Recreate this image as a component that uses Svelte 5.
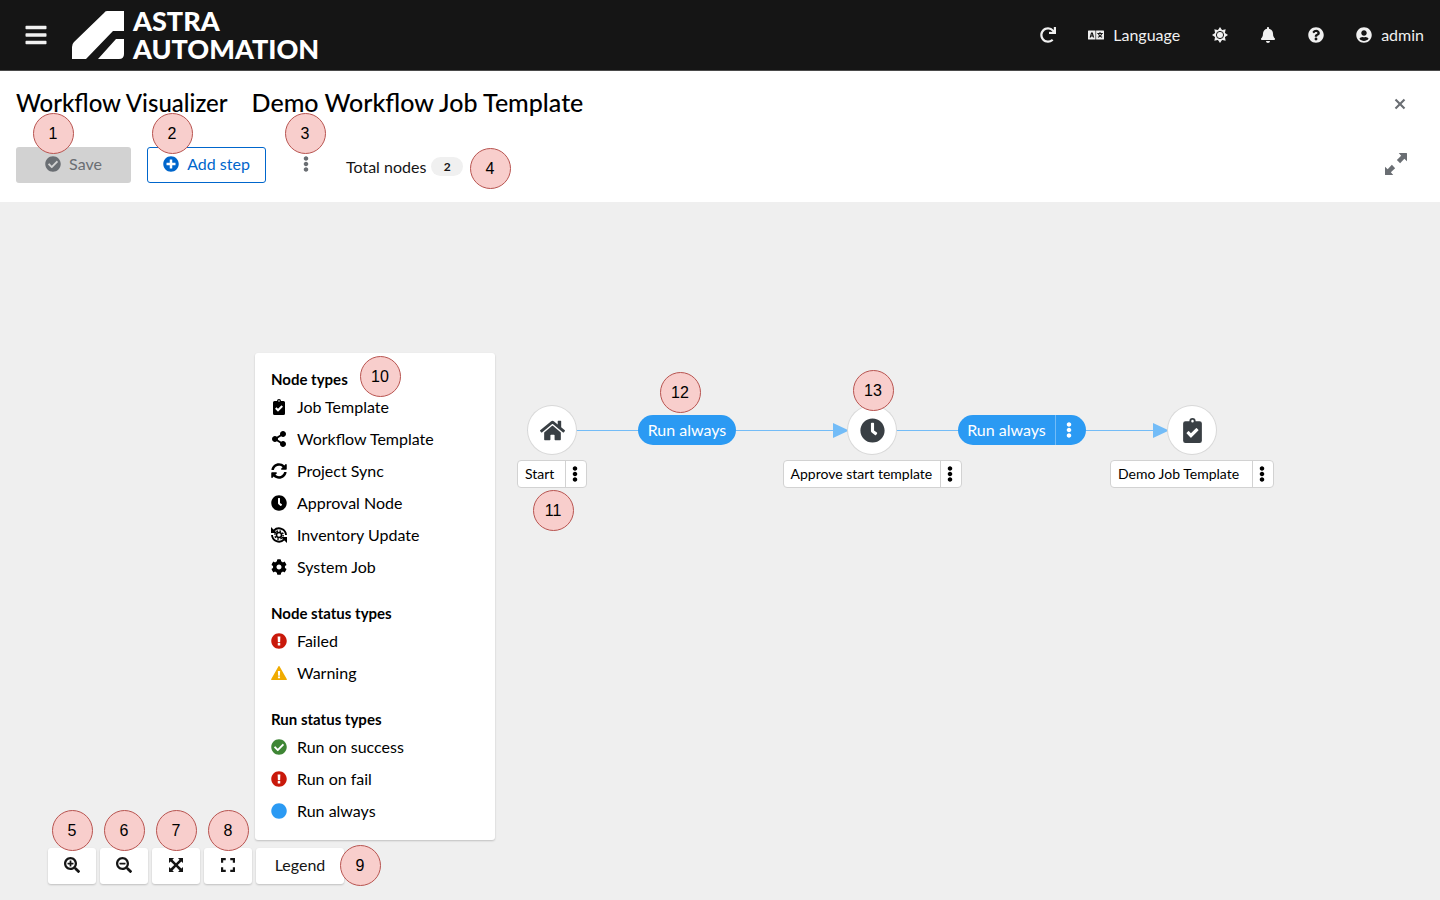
<script>
  const circle = 'M504 256c0 137-111 248-248 248S8 393 8 256 119 8 256 8s248 111 248 248z';
  const bar = 'h416a16 16 0 0 0 16-16v-40a16 16 0 0 0-16-16H16a16 16 0 0 0-16 16v40a16 16 0 0 0 16 16z';
  const lens = 'M505 476.7L476.7 505c-9.4 9.4-24.6 9.4-33.9 0L343 405.3c-4.5-4.5-7-10.6-7-17V372c-35.3 27.6-79.7 44-128 44C93.1 416 0 322.9 0 208S93.1 0 208 0s208 93.1 208 208c0 48.3-16.4 92.7-44 128h16.3c6.4 0 12.5 2.5 17 7l99.7 99.7c9.3 9.4 9.3 24.6 0 34zM344 208a136 136 0 1 0-272 0 136 136 0 0 0 272 0z';
  const icons = {
    redo: { w: 512, d: 'M500.33 0h-47.41a12 12 0 0 0-12 12.57l4 82.76A247.42 247.42 0 0 0 256 8C119.34 8 7.9 119.53 8 256.19 8.1 393.07 119.1 504 256 504a247.1 247.1 0 0 0 166.18-63.91 12 12 0 0 0 .48-17.43l-34-34a12 12 0 0 0-16.38-.55A176 176 0 1 1 402.1 157.8l-101.53-4.87a12 12 0 0 0-12.57 12v47.41a12 12 0 0 0 12 12h200.33a12 12 0 0 0 12-12V12a12 12 0 0 0-12-12z' },
    bars: { w: 448, d: 'M16 132' + bar + 'M16 292' + bar + 'M16 452' + bar },
    bell: { w: 448, d: 'M224 512c35.32 0 63.97-28.65 63.97-64H160.03c0 35.35 28.65 64 63.97 64zm215.39-149.71c-19.32-20.76-55.47-51.99-55.47-154.29 0-77.7-54.48-139.9-127.94-155.16V32c0-17.67-14.32-32-31.98-32s-31.98 14.33-31.98 32v20.84C118.56 68.1 64.08 130.3 64.08 208c0 102.3-36.15 133.53-55.47 154.29-6 6.45-8.66 14.16-8.61 21.71.11 16.4 12.98 32 32.1 32h383.8c19.12 0 32-15.6 32.1-32 .05-7.55-2.61-15.27-8.61-21.71z' },
    help: { w: 512, d: circle + 'M262.655 90c-54.497 0-89.255 22.957-116.549 63.758-3.536 5.286-2.353 12.415 2.715 16.258l34.699 26.31c5.205 3.947 12.621 3.008 16.665-2.122 17.864-22.658 30.113-35.797 57.303-35.797 20.429 0 45.698 13.148 45.698 32.958 0 14.976-12.363 22.667-32.534 33.976C247.128 238.528 216 254.941 216 296v4c0 6.627 5.373 12 12 12h56c6.627 0 12-5.373 12-12v-1.333c0-28.462 83.186-29.647 83.186-106.667 0-58.002-60.165-102-116.531-102zM256 338c-25.365 0-46 20.635-46 46 0 25.364 20.635 46 46 46s46-20.636 46-46c0-25.365-20.635-46-46-46z' },
    user: { w: 496, d: 'M248 8C111 8 0 119 0 256s111 248 248 248 248-111 248-248S385 8 248 8zm0 96c48.6 0 88 39.4 88 88s-39.4 88-88 88-88-39.4-88-88 39.4-88 88-88zm0 344c-58.7 0-111.3-26.6-146.5-68.2 18.8-35.4 55.6-59.8 98.5-59.8 2.4 0 4.8.4 7.1 1.1 13 4.2 26.6 6.9 40.9 6.9 14.3 0 28-2.7 40.9-6.9 2.3-.7 4.7-1.1 7.1-1.1 42.9 0 79.7 24.4 98.5 59.8C359.3 421.4 306.7 448 248 448z' },
    language: { w: 512, d: 'M20 110h220v292H20a20 20 0 0 1-20-20V130a20 20 0 0 1 20-20zM260 110h232a20 20 0 0 1 20 20v252a20 20 0 0 1-20 20H260zM98 172L52 336h40l9-32h48l9 32h40L152 172zM125 214l15 54h-30zM368 160v32h-70v32h24c8 28 22 48 38 66-14 10-32 18-50 24l16 30c24-8 44-20 60-34 16 14 36 26 60 34l16-30c-18-6-36-14-50-24 16-18 30-38 38-66h24v-32h-74v-32zM356 226h60c-6 16-16 30-30 42-14-12-24-26-30-42z' },
    check: { w: 512, d: circle + 'M227.314 387.314l184-184c6.248-6.248 6.248-16.379 0-22.627l-22.627-22.627c-6.248-6.249-16.379-6.249-22.628 0L216 308.118l-70.059-70.059c-6.248-6.248-16.379-6.248-22.628 0l-22.627 22.627c-6.248 6.248-6.248 16.379 0 22.627l104 104c6.249 6.249 16.379 6.249 22.628.001z' },
    plus: { w: 512, d: circle + 'M400 284c0 6.6-5.4 12-12 12h-92v92c0 6.6-5.4 12-12 12h-56c-6.6 0-12-5.4-12-12v-92h-92c-6.6 0-12-5.4-12-12v-56c0-6.6 5.4-12 12-12h92v-92c0-6.6 5.4-12 12-12h56c6.6 0 12 5.4 12 12v92h92c6.6 0 12 5.4 12 12v56z' },
    dots: { w: 192, d: 'M96 184c39.8 0 72 32.2 72 72s-32.2 72-72 72-72-32.2-72-72 32.2-72 72-72zM24 80c0 39.8 32.2 72 72 72s72-32.2 72-72S135.8 8 96 8 24 40.2 24 80zm0 352c0 39.8 32.2 72 72 72s72-32.2 72-72-32.2-72-72-72-72 32.2-72 72z' },
    clock: { w: 512, d: circle + 'M348.49 321l-20 25a16 16 0 0 1-22.49 2.5l-67-49.72a40 40 0 0 1-15-31.23V112a16 16 0 0 1 16-16h32a16 16 0 0 1 16 16V256l58 42.5A16 16 0 0 1 348.49 321Z' },
    share: { w: 448, d: 'M352 320c-22.608 0-43.387 7.819-59.79 20.895l-102.486-64.054a96.551 96.551 0 0 0 0-41.683l102.486-64.054C308.613 184.181 329.392 192 352 192c53.019 0 96-42.981 96-96S405.019 0 352 0s-96 42.981-96 96c0 7.158.79 14.13 2.276 20.841L155.79 180.895C139.387 167.819 118.608 160 96 160c-53.019 0-96 42.981-96 96s42.981 96 96 96c22.608 0 43.387-7.819 59.79-20.895l102.486 64.054A96.301 96.301 0 0 0 256 416c0 53.019 42.981 96 96 96s96-42.981 96-96-42.981-96-96-96z' },
    sync: { w: 512, d: 'M370.72 133.28C339.458 104.008 298.888 87.962 255.848 88c-77.458.068-144.328 53.178-162.791 126.85-1.344 5.363-6.122 9.15-11.651 9.15H24.103c-7.498 0-13.194-6.807-11.807-14.176C33.933 94.924 134.813 8 256 8c66.448 0 126.791 26.136 171.315 68.685L463.03 40.97C478.149 25.851 504 36.559 504 57.941V192c0 13.255-10.745 24-24 24H345.941c-21.382 0-32.09-25.851-16.971-40.971l41.75-41.749zM32 296h134.059c21.382 0 32.09 25.851 16.971 40.971l-41.75 41.75c31.262 29.273 71.835 45.319 114.876 45.28 77.418-.07 144.315-53.144 162.787-126.849 1.344-5.363 6.122-9.15 11.651-9.15h57.304c7.498 0 13.194 6.807 11.807 14.176C478.067 417.076 377.187 504 256 504c-66.448 0-126.791-26.136-171.315-68.685L48.97 471.03C33.851 486.149 8 475.441 8 454.059V320c0-13.255 10.745-24 24-24z' },
    cog: { w: 512, d: 'M487.4 315.7l-42.6-24.6c4.3-23.2 4.3-47 0-70.2l42.6-24.6c4.9-2.8 7.1-8.6 5.5-14-11.1-35.6-30-67.8-54.7-94.6-3.8-4.1-10-5.1-14.8-2.3L380.8 110c-17.9-15.4-38.5-27.3-60.8-35.1V25.8c0-5.6-3.9-10.5-9.4-11.7-36.7-8.2-74.3-7.8-109.2 0-5.5 1.2-9.4 6.1-9.4 11.7V75c-22.2 7.9-42.8 19.8-60.8 35.1L88.7 85.5c-4.9-2.8-11-1.9-14.8 2.3-24.7 26.7-43.6 58.9-54.7 94.6-1.7 5.4.6 11.2 5.5 14L67.3 221c-4.3 23.2-4.3 47 0 70.2l-42.6 24.6c-4.9 2.8-7.1 8.6-5.5 14 11.1 35.6 30 67.8 54.7 94.6 3.8 4.1 10 5.1 14.8 2.3l42.6-24.6c17.9 15.4 38.5 27.3 60.8 35.1v49.2c0 5.6 3.9 10.5 9.4 11.7 36.7 8.2 74.3 7.8 109.2 0 5.5-1.2 9.4-6.1 9.4-11.7v-49.2c22.2-7.9 42.8-19.8 60.8-35.1l42.6 24.6c4.9 2.8 11 1.9 14.8-2.3 24.7-26.7 43.6-58.9 54.7-94.6 1.5-5.5-.7-11.3-5.6-14.1zM256 336c-44.1 0-80-35.9-80-80s35.9-80 80-80 80 35.9 80 80-35.9 80-80 80z' },
    failed: { w: 512, d: circle + 'M212 112l8 186h72l8-186zM216 322v74h80v-74z' },
    warning: { w: 512, d: 'M236 44L4 452c-8 16 0 28 16 28h472c16 0 24-12 16-28L276 44c-10-16-30-16-40 0zM220 190h72l-8 150h-56zM222 364h68v62h-68z' },
    home: { w: 576, d: 'M280.37 148.26L96 300.11V464a16 16 0 0 0 16 16l112.06-.29a16 16 0 0 0 15.92-16V368a16 16 0 0 1 16-16h64a16 16 0 0 1 16 16v95.64a16 16 0 0 0 16 16.05L464 480a16 16 0 0 0 16-16V300L295.67 148.26a12.19 12.19 0 0 0-15.3 0zM571.6 251.47L488 182.56V44.05a12 12 0 0 0-12-12h-56a12 12 0 0 0-12 12v72.61L318.47 43a48 48 0 0 0-61 0L4.34 251.47a12 12 0 0 0-1.6 16.9l25.5 31A12 12 0 0 0 45.15 301l235.22-193.74a12.19 12.19 0 0 1 15.3 0L530.9 301a12 12 0 0 0 16.9-1.6l25.5-31a12 12 0 0 0-1.7-16.93z' },
    clipboard: { w: 384, d: 'M48 64h80a64 64 0 0 1 128 0h80a48 48 0 0 1 48 48v352a48 48 0 0 1-48 48H48a48 48 0 0 1-48-48V112a48 48 0 0 1 48-48zM192 38a26 26 0 1 0 0 52 26 26 0 0 0 0-52zM311 240l-30-30a12 12 0 0 0-17 0l-104 104-40-42a12 12 0 0 0-17 0l-30 30a12 12 0 0 0 0 17l78 80a12 12 0 0 0 17 0l143-142a12 12 0 0 0 0-17z' },
    zoomIn: { w: 512, d: lens + 'M304 192v32c0 6.6-5.4 12-12 12h-56v56c0 6.6-5.4 12-12 12h-32c-6.6 0-12-5.4-12-12v-56h-56c-6.6 0-12-5.4-12-12v-32c0-6.6 5.4-12 12-12h56v-56c0-6.6 5.4-12 12-12h32c6.6 0 12 5.4 12 12v56h56c6.6 0 12 5.4 12 12z' },
    zoomOut: { w: 512, d: lens + 'M304 192v32c0 6.6-5.4 12-12 12H124c-6.6 0-12-5.4-12-12v-32c0-6.6 5.4-12 12-12h168c6.6 0 12 5.4 12 12z' },
    fit: { w: 512, d: 'M32 32h160l-48 52 112 116L368 84l-48-52h160v160l-52-48-116 112 116 112 52-48v160H320l48-52-112-116-112 116 48 52H32V320l52 48 116-112L84 144l-52 48z' },
    expand: { w: 512, d: 'M32 32h152v70H102v82H32zM328 32h152v152h-70v-82h-82zM32 328h70v82h82v70H32zM410 328h70v152H328v-70h82z' },
    resize: { w: 512, d: 'M320 0h180q12 0 12 12v180l-62-56-98 100-76-76 100-98zM192 512H12q-12 0-12-12V320l62 56 98-100 76 76-100 98z' },
    close: { w: 352, d: 'M8 136l48-48 120 120 120-120 48 48-120 120 120 120-48 48-120-120-120 120-48-48 120-120z' },
    dot: { w: 512, d: circle }
  };

  const groups = [
    { title: 'Node types', items: [['clipboard', 'Job Template'], ['share', 'Workflow Template'], ['sync', 'Project Sync'], ['clock', 'Approval Node'], ['inventory', 'Inventory Update'], ['cog', 'System Job']] },
    { title: 'Node status types', items: [['failed', 'Failed', 'red'], ['warning', 'Warning', 'gold']] },
    { title: 'Run status types', items: [['check', 'Run on success', 'green'], ['failed', 'Run on fail', 'red'], ['dot', 'Run always', 'blue']] }
  ];
  const nodes = [
    { x: 552, icon: 'home', label: 'Start', width: 70 },
    { x: 872, icon: 'clock', label: 'Approve start template', width: 179 },
    { x: 1192, icon: 'clipboard', label: 'Demo Job Template', width: 164 }
  ];
  const controls = [
    { icon: 'zoomIn', label: 'Zoom in', n: 5 },
    { icon: 'zoomOut', label: 'Zoom out', n: 6 },
    { icon: 'fit', label: 'Fit to screen', n: 7 },
    { icon: 'expand', label: 'Reset view', n: 8 }
  ];
</script>

{#snippet icon(name, size = 16)}
  {#if name === 'sun'}
    <svg class="icon" width={size} height={size} viewBox="0 0 16 16" aria-hidden="true">
      {#each [0, 45, 90, 135, 180, 225, 270, 315] as a}
        <path d="M5.5 3.8L8 0l2.500 3.800z" fill="currentColor" transform="rotate({a} 8 8)" />
      {/each}
      <circle cx="8" cy="8" r="5.4" fill="currentColor" />
      <circle cx="8" cy="8" r="3.6" fill="none" stroke="#151515" stroke-width="1" />
    </svg>
  {:else if name === 'inventory'}
    <svg class="icon" width={size} height={size} viewBox="0 0 16 16" aria-hidden="true">
      <g fill="none" stroke="currentColor">
        <path d="M3 3.5A7 7 0 0 1 15 8M1 8a7 7 0 0 0 12 4.5" stroke-width="1.9" />
        <circle cx="8" cy="8" r="2.5" stroke-width="1.5" />
        <circle cx="8" cy="8" r="4.1" stroke-width="1.5" stroke-dasharray="1.61 1.61" />
      </g>
      <path d="M0 0v6h6zM16 16v-6h-6z" fill="currentColor" />
    </svg>
  {:else}
    <svg class="icon" width={size} height={size} viewBox="0 0 {icons[name].w} 512" aria-hidden="true">
      <path d={icons[name].d} fill="currentColor" fill-rule="evenodd" />
    </svg>
  {/if}
{/snippet}

{#snippet callout(n, x, y)}
  <span class="callout" style="left:{x}px;top:{y}px">{n}</span>
{/snippet}

<div class="page">
  <header class="masthead">
    <button aria-label="Main menu">{@render icon('bars', 24)}</button>
    <a class="brand" href="#home">
      <svg width="52" height="48" viewBox="0 0 52 48" aria-hidden="true">
        <path d="M35 0h17v20H41L14 48H0V36q0-3 2-5L32 2q1-2 3-2zM44 28h8v15q0 5-5 5H26z" fill="#fff" />
      </svg>
      <span class="wordmark">ASTRA<br />AUTOMATION</span>
    </a>
    <nav class="tools" aria-label="Tools">
      <button aria-label="Refresh">{@render icon('redo')}</button>
      <button>{@render icon('language')}Language</button>
      <button aria-label="Theme">{@render icon('sun')}</button>
      <button aria-label="Notifications">{@render icon('bell')}</button>
      <button aria-label="Help">{@render icon('help')}</button>
      <button>{@render icon('user')}admin</button>
    </nav>
  </header>

  <section class="heading">
    <div class="titles">
      <h1>Workflow Visualizer</h1>
      <h2>Demo Workflow Job Template</h2>
      <button class="gray end" aria-label="Close">{@render icon('close')}</button>
    </div>
    <div class="toolbar">
      <div class="anchor">
        <button class="save" disabled>{@render icon('check')}Save</button>
        {@render callout(1, 37, -14)}
      </div>
      <div class="anchor">
        <button class="add">{@render icon('plus')}Add step</button>
        {@render callout(2, 25, -14)}
      </div>
      <div class="anchor">
        <button class="gray kebab" aria-label="More actions">{@render icon('dots')}</button>
        {@render callout(3, 23, -14)}
      </div>
      <div class="anchor total">
        Total nodes <span class="count">2</span>
        {@render callout(4, 144, 21)}
      </div>
      <button class="gray end" aria-label="Full screen">{@render icon('resize', 22)}</button>
    </div>
  </section>

  <main class="canvas">
    <div class="diagram">
      <svg class="edges" aria-hidden="true">
        <path d="M527 228.5H834M896 228.5H1154" stroke="#73bcf7" fill="none" />
        <path d="M833 221v15l16-7.5zM1153 221v15l16-7.5z" fill="#73bcf7" />
      </svg>
      {#each nodes as node}
        <div class="node" style="left:{node.x}px">
          <div class="disc">{@render icon(node.icon, 25)}</div>
          <div class="tag" style="width:{node.width}px">
            <span>{node.label}</span>
            <button aria-label="{node.label} actions">{@render icon('dots')}</button>
          </div>
        </div>
      {/each}
      <div class="pill first"><span>Run always</span></div>
      <div class="pill second">
        <span>Run always</span>
        <button aria-label="Edge actions">{@render icon('dots')}</button>
      </div>
      {@render callout(11, 553, 308)}
      {@render callout(12, 680, 190)}
      {@render callout(13, 873, 188)}
    </div>

    <aside class="legend anchor">
      {#each groups as group}
        <section>
          <h3>{group.title}</h3>
          <ul>
            {#each group.items as [name, label, tone]}
              <li><span class={tone}>{@render icon(name)}</span>{label}</li>
            {/each}
          </ul>
        </section>
      {/each}
      {@render callout(10, 125, 23)}
    </aside>

    <div class="controls">
      {#each controls as c}
        <div class="anchor">
          <button aria-label={c.label}>{@render icon(c.icon)}</button>
          {@render callout(c.n, 24, -18)}
        </div>
      {/each}
      <div class="anchor">
        <button class="legend-toggle">Legend</button>
        {@render callout(9, 104, 17)}
      </div>
    </div>
  </main>
</div>

<style>
  :global(body) { margin: 0; }
  .page {
    min-height: 100vh;
    display: flex;
    flex-direction: column;
    background: #fff;
    color: #151515;
    font: 16px/24px Lato, sans-serif;
  }
  .page :global(*) { box-sizing: border-box; }
  button {
    font: inherit;
    color: inherit;
    border: 0;
    background: none;
    padding: 0;
    display: flex;
    align-items: center;
    justify-content: center;
  }
  h1, h2, h3, ul { margin: 0; padding: 0; }
  .icon { display: block; flex: none; }
  .masthead {
    height: 71px;
    display: flex;
    align-items: center;
    padding: 0 16px 0 24px;
    background: #151515;
    border-bottom: 1px solid #4a4a4a;
    color: #f0f0f0;
  }
  .brand {
    display: flex;
    gap: 9px;
    height: 48px;
    margin-left: 24px;
    color: #fff;
    text-decoration: none;
  }
  .wordmark { font-size: 27px; line-height: 28px; font-weight: 900; margin-top: -4px; }
  .tools { display: flex; gap: 32px; margin-left: auto; }
  .tools button { gap: 9px; }
  .heading { padding: 16px 16px 19px; }
  .titles { display: flex; align-items: center; gap: 24px; height: 32px; color: #000; }
  h1, h2 { font-size: 24px; line-height: 32px; font-weight: 500; }
  h2 { font-size: 25px; line-height: 30px; padding-bottom: 2px; }
  .gray { color: #6a6e73; }
  .end { margin: 0 8px 0 auto; width: 32px; height: 32px; }
  .titles .end { padding-top: 2px; }
  .toolbar { display: flex; align-items: center; gap: 16px; margin-top: 28px; }
  .toolbar .end { width: 40px; padding-bottom: 2px; }
  .save, .add, .kebab { height: 36px; padding-bottom: 2px; gap: 8px; border-radius: 3px; }
  .save { width: 115px; background: #d2d2d2; color: #6a6e73; }
  .add { width: 119px; border: 1px solid #06c; color: #06c; }
  .kebab { width: 48px; }
  .anchor { position: relative; }
  .total { display: flex; align-items: center; gap: 5px; height: 36px; padding-top: 3px; }
  .count {
    width: 32px;
    border-radius: 10px;
    background: #f0f0f0;
    font-size: 12px;
    line-height: 19px;
    font-weight: 700;
    text-align: center;
  }
  .canvas {
    position: relative;
    flex: 1;
    display: flex;
    flex-direction: column;
    justify-content: flex-end;
    gap: 8px;
    padding: 151px 0 16px 48px;
    background: #efefef;
  }
  .diagram { position: absolute; inset: 0; }
  .edges { position: absolute; width: 100%; height: 100%; }
  .node { position: absolute; top: 204px; width: 0; display: flex; flex-direction: column; align-items: center; gap: 6px; }
  .disc {
    flex: none;
    width: 48px;
    height: 48px;
    border-radius: 50%;
    background: #fff;
    box-shadow: 0 0 0 1px #d8d8d8;
    color: #393f44;
    display: flex;
    align-items: center;
    justify-content: center;
  }
  .tag {
    height: 28px;
    display: flex;
    border: 1px solid #d2d2d2;
    border-radius: 4px;
    background: #fff;
    color: #000;
    font-size: 14px;
    line-height: 26px;
    white-space: nowrap;
  }
  .tag span { flex: 1; padding-left: 7px; }
  .tag button { width: 21px; padding-right: 2px; border-left: 1px solid #d2d2d2; }
  .pill {
    position: absolute;
    top: 213px;
    height: 30px;
    display: flex;
    border-radius: 15px;
    background: #2b9af3;
    color: #fff;
    line-height: 30px;
  }
  .pill span { flex: 1; text-align: center; }
  .pill button { width: 31px; padding-right: 5px; border-left: 1px solid #73bcf7; }
  .first { left: 638px; width: 98px; }
  .second { left: 958px; width: 128px; }
  .legend {
    width: 240px;
    margin-left: 207px;
    padding: 14px 16px 13px;
    display: flex;
    flex-direction: column;
    gap: 18px;
    border-radius: 3px;
    background: #fff;
    color: #000;
    box-shadow: 0 1px 2px rgba(0, 0, 0, 0.2);
  }
  h3 { font-size: 15px; line-height: 24px; font-weight: 700; }
  ul { list-style: none; }
  li { display: flex; align-items: center; gap: 10px; height: 32px; }
  .red { color: #c9190b; }
  .gold { color: #f0ab00; }
  .green { color: #3e8635; }
  .blue { color: #2b9af3; }
  .controls { display: flex; gap: 4px; }
  .controls button {
    min-width: 48px;
    height: 36px;
    padding: 0 16px 2px;
    border-radius: 3px;
    background: #fff;
    box-shadow: 0 1px 2px rgba(0, 0, 0, 0.2);
  }
  .controls .legend-toggle { min-width: 88px; }
  .callout {
    position: absolute;
    width: 41px;
    height: 41px;
    margin: -20px 0 0 -20px;
    padding-right: 1px;
    border: 1px solid #b85450;
    border-radius: 50%;
    background: #f8cecc;
    color: #000;
    font: 16px/39px "Liberation Sans", sans-serif;
    text-align: center;
  }
</style>
